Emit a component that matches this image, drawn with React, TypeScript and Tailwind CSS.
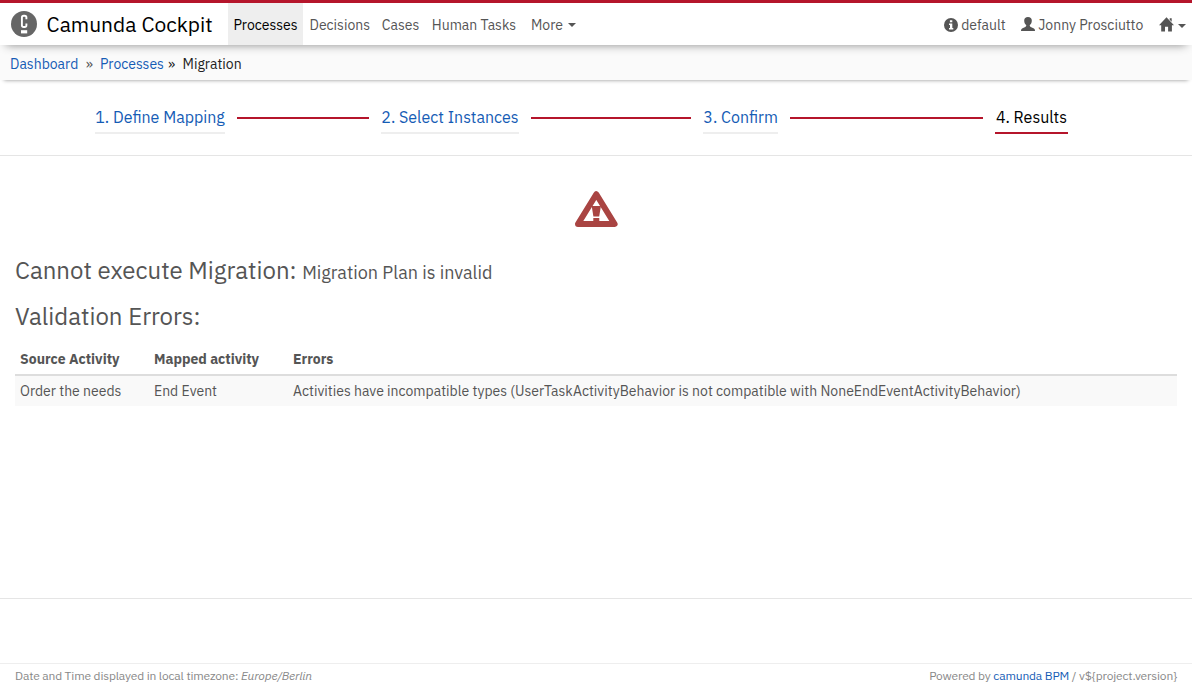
import type { ReactNode } from 'react';

function CamundaLogo() {
  return (
    <svg width="26" height="26" viewBox="0 0 26 26" className="shrink-0">
      <circle cx="13" cy="13" r="13" fill="#666666" />
      <path
        d="M15.400 8.200V6.600c0-1-.7-1.800-1.800-1.800h-.9c-1.100 0-1.800.8-1.800 1.800v7.600c0 1 .7 1.800 1.800 1.800h.9c1.100 0 1.800-.8 1.800-1.800v-1.600"
        fill="none"
        stroke="#fff"
        strokeWidth="1.900"
      />
      <rect x="10" y="19.200" width="6.200" height="3.200" fill="#fff" />
    </svg>
  );
}

function InfoIcon() {
  return (
    <svg width="14" height="14" viewBox="0 0 14 14" className="shrink-0">
      <circle cx="7" cy="7" r="7" fill="#555" />
      <path d="M5.900 2.200h2.400v2H5.900zM5 5.600h3.300v4.500h1v1.400H5v-1.400h1V7H5z" fill="#fff" />
    </svg>
  );
}

function UserIcon() {
  return (
    <svg width="14" height="14" viewBox="0 0 14 14" className="-mt-px shrink-0" fill="#555">
      <path d="M7 0C4.600 0 3.200 1.400 3.200 3.500c0 2 .7 3.500 2 4.600.2.800-.1 1.400-.9 1.800L1.500 11.200C.5 11.700 0 12.300 0 13.900h14c0-1.600-.5-2.200-1.500-2.700L9.700 9.900c-.8-.4-1.100-1-.9-1.800 1.300-1.100 2-2.600 2-4.600C10.800 1.400 9.400 0 7 0z" />
    </svg>
  );
}

function HomeIcon() {
  return (
    <svg width="15" height="15" viewBox="0 0 15 15" className="-mt-px shrink-0" fill="#555">
      <path d="M7.500.2 15 8.200h-2.100V14.600H9.100V9.700H6v4.900H2.200V8.200H0zM10.700 1.300h2v3.500l-2-2z" />
    </svg>
  );
}

function WarningIcon() {
  return (
    <svg width="44" height="38" viewBox="0 0 44 38">
      <path d="M22.300 4.200 L40.600 34 H4 Z" fill="none" stroke="#a94442" strokeWidth="6" strokeLinejoin="round" />
      <path d="M17.700 16h9.200l-1.700 10.600h-5.800zM19.300 28h6v4h-6z" fill="#a94442" />
    </svg>
  );
}

function Caret() {
  return (
    <svg width="8" height="4" viewBox="0 0 8 4" className="shrink-0" fill="#555">
      <path d="M0 0h8L4 4z" />
    </svg>
  );
}

function Step({ children, className }: { children: ReactNode; className: string }) {
  return (
    <div className={`h-[28px] shrink-0 whitespace-nowrap border-b-2 text-[16px] leading-[22px] ${className}`}>
      {children}
    </div>
  );
}

export default function App() {
  return (
    <div className="flex h-[687px] w-[1192px] flex-col overflow-hidden bg-white font-['IBM_Plex_Sans',Roboto,sans-serif] text-[14px] leading-[20px] text-[#555]">
      <header className="relative z-20 flex h-[45px] shrink-0 border-t-3 border-[#b5152b] bg-white shadow-[0_6px_9px_-6px_rgba(0,0,0,0.45)]">
        <div className="flex w-[228px] items-center pl-[11px]">
          <CamundaLogo />
          <span className="ml-[9.600px] whitespace-nowrap pb-px text-[21px] text-black">Camunda Cockpit</span>
        </div>
        <nav className="flex items-center whitespace-nowrap pt-px">
          <a className="-mt-px flex h-[42px] w-[75px] items-center justify-center bg-[#eee] pt-px text-black">Processes</a>
          <a className="ml-[6.500px] w-[72.300px]">Decisions</a>
          <a className="w-[50px]">Cases</a>
          <a className="w-[99.200px]">Human Tasks</a>
          <a className="w-[37px]">More</a>
          <Caret />
        </nav>
        <div className="ml-auto flex items-center whitespace-nowrap pr-[6px] pt-px">
          <InfoIcon />
          <span className="ml-[3.200px] w-[59.800px]">default</span>
          <UserIcon />
          <span className="ml-[3.200px] w-[120.800px]">Jonny Prosciutto</span>
          <HomeIcon />
          <span className="ml-[4px] mt-[3px]"><Caret /></span>
        </div>
      </header>

      <div className="relative z-10 flex h-[35px] shrink-0 items-center whitespace-nowrap bg-[#fafafa] pl-[10px] pt-[3px] shadow-[0_4px_4px_-4px_rgba(0,0,0,0.45)]">
        <a className="w-[75.800px] text-[#155cb5]">Dashboard</a>
        <span className="w-[14.200px]">»</span>
        <a className="w-[68px] text-[#155cb5]">Processes</a>
        <span className="w-[14.600px] text-[#222]">»</span>
        <span className="text-[#222]">Migration</span>
      </div>

      <div className="flex h-[76px] shrink-0 border-b border-[#e5e5e5] pl-[95px] pt-[26px]">
        <Step className="w-[130px] border-[#eee] pl-[0.200px] text-[#155cb5]">1. Define Mapping</Step>
        <div className="mx-[12px] mt-[11px] h-[2px] w-[132px] bg-[#b5152b]" />
        <Step className="w-[138px] border-[#eee] pl-[0.300px] text-[#155cb5]">2. Select Instances</Step>
        <div className="mx-[12px] mt-[11px] h-[2px] w-[160px] bg-[#b5152b]" />
        <Step className="w-[75px] border-[#eee] pl-[0.300px] text-[#155cb5]">3. Confirm</Step>
        <div className="mx-[12px] mt-[11px] h-[2px] w-[193px] bg-[#b5152b]" />
        <Step className="w-[73px] border-[#b5152b] pl-[0.900px] text-black">4. Results</Step>
      </div>

      <main className="h-[443px] shrink-0 border-b border-[#e5e5e5] px-[15px] pt-[34px]">
        <div className="flex h-[38px] justify-center"><WarningIcon /></div>
        <h3 className="mt-[29px] flex h-[26px] items-baseline whitespace-nowrap text-[24px] leading-[26px]">
          <span className="w-[287.200px]">Cannot execute Migration:</span>
          <small className="text-[18px]">Migration Plan is invalid</small>
        </h3>
        <h3 className="mt-[20px] h-[26px] whitespace-nowrap text-[24px] leading-[26px]">Validation Errors:</h3>
        <table className="mt-[14px] w-full table-fixed border-collapse text-left">
          <thead>
            <tr className="h-[32px] border-b-2 border-[#ddd] font-bold">
              <th className="w-[134px] px-[5px]">Source Activity</th>
              <th className="w-[139px] px-[5px]">Mapped activity</th>
              <th className="px-[5px]">Errors</th>
            </tr>
          </thead>
          <tbody>
            <tr className="h-[31px] bg-[#f9f9f9]">
              <td className="px-[5px]">Order the needs</td>
              <td className="px-[5px]">End Event</td>
              <td className="px-[5px]">
                <span>Activities have incompatible types (UserTaskActivityBehavior is not compatible with NoneEndEventActivityBehavior)</span>
              </td>
            </tr>
          </tbody>
        </table>
      </main>

      <footer className="mt-[64px] flex h-[24px] shrink-0 justify-between whitespace-nowrap border-t border-[#eee] px-[15px] pt-[2px] text-[12px] tracking-[-0.160px] text-[#888]">
        <div>Date and Time displayed in local timezone: <em>Europe/Berlin</em></div>
        <div>Powered by <a className="text-[#155cb5]">camunda BPM</a> / v$&#123;project.version&#125;</div>
      </footer>
    </div>
  );
}
